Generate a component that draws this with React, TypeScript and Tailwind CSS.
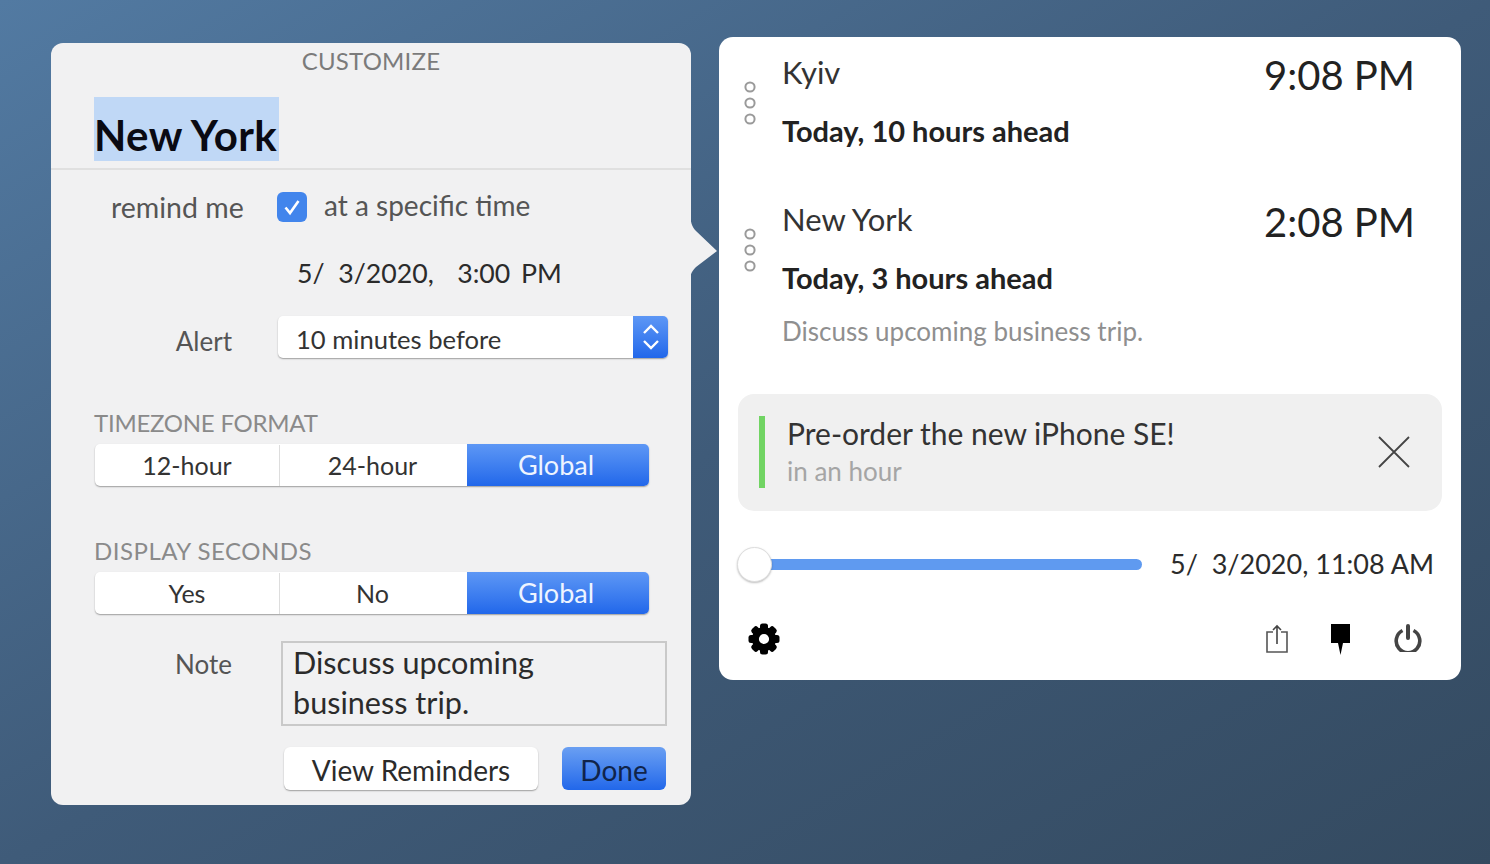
import React from "react";

const font = { fontFamily: "Lato, 'Noto Sans', sans-serif" };

function Segmented({ items }: { items: string[] }) {
  return (
    <div className="flex h-[42px] w-[554px] rounded-[5px] bg-white pt-[1px] shadow-[0_1px_1.5px_rgba(0,0,0,0.35)] text-[25px] text-[#333]">
      <div className="flex w-[185px] items-center justify-center border-r border-[#ddd]">{items[0]}</div>
      <div className="flex w-[187px] items-center justify-center pr-[2px]">{items[1]}</div>
      <div className="-mt-[1px] flex flex-1 items-center justify-center rounded-r-[5px] bg-gradient-to-b from-[#5d97f5] to-[#2167ea] pr-[4px] pt-[1px] text-[27px] text-[#eef4ff]">Global</div>
    </div>
  );
}

function Dots() {
  return (
    <svg width="14" height="48" viewBox="0 0 14 48" className="shrink-0">
      {[7, 23, 39].map((y) => (
        <circle key={y} cx="7" cy={y} r="4.6" fill="none" stroke="#9a9a9a" strokeWidth="2" />
      ))}
    </svg>
  );
}

function Row({ city, time, sub, note }: { city: string; time: string; sub: string; note?: string }) {
  return (
    <div className="flex">
      <div className="w-[63px] pt-[27px] pl-[24px]"><Dots /></div>
      <div className="flex-1 pr-[46px]">
        <div className="flex items-start justify-between">
          <div className="text-[31px] leading-[38px] text-[#333]">{city}</div>
          <div className="-mt-[1px] text-[40px] leading-[46px] text-[#222]">{time}</div>
        </div>
        <div className="mt-[15px] text-[29px] font-bold leading-[36px] text-[#222]">{sub}</div>
        {note && <div className="mt-[17px] text-[26px] leading-[36px] text-[#8f8f8f]">{note}</div>}
      </div>
    </div>
  );
}

function Gear() {
  return (
    <svg width="32" height="32" viewBox="0 0 32 32" className="-ml-[1px] mr-[1px]">
      <circle cx="16" cy="16" r="8.6" fill="none" stroke="#000" strokeWidth="7" />
      {[0, 45, 90, 135, 180, 225, 270, 315].map((a) => (
        <rect key={a} x="12" y="0.5" width="8" height="8" rx="2.5" fill="#000" transform={`rotate(${a} 16 16)`} />
      ))}
    </svg>
  );
}

export default function App() {
  return (
    <div
      style={font}
      className="flex h-[864px] w-[1490px] items-start gap-[28px] overflow-hidden bg-gradient-to-br from-[#527aa2] via-[#3f5b79] to-[#344a60] pl-[51px] pt-[37px]"
    >
      {/* Left panel */}
      <div className="relative mt-[6px] h-[762px] w-[640px] rounded-[12px] bg-[#f1f1f2]">
        <svg className="absolute left-[639px] top-[167px]" width="28" height="84" viewBox="0 0 28 84">
          <path d="M0 0 C0 12 2 17 6 21 L27 41 L6 57 C2 61 0 64 0 72 Z" fill="#f1f1f2" />
        </svg>
        <div className="pt-[3px] text-center text-[24px] leading-[30px] tracking-[0.2px] text-[#7b7b7b]">CUSTOMIZE</div>
        <div className="mt-[21px] flex h-[73px] items-start border-b-2 border-[#e0e0e0] pl-[43px]">
          <div className="flex h-[64px] w-[185px] items-end bg-[#c0d8f6] text-[42px] font-bold leading-[50px] tracking-[0.4px] text-[#0a0a12]">
            <span className="mb-[1px]">New York</span>
          </div>
        </div>
        <div className="mt-[19px] flex items-center pl-[60px]">
          <div className="w-[166px] text-[28.5px] leading-[36px] text-[#555]">remind me</div>
          <div className="flex h-[30px] w-[30px] items-center justify-center rounded-[6px] bg-[#4285ec]">
            <svg width="20" height="20" viewBox="0 0 20 20">
              <path d="M3.5 10.5 L8 16 L16.5 4" fill="none" stroke="#fff" strokeWidth="2.6" />
            </svg>
          </div>
          <div className="ml-[17px] -mt-[4px] text-[28px] leading-[36px] text-[#555]">at a specific time</div>
        </div>
        <div className="mt-[30px] whitespace-pre pl-[246px] text-[26.7px] leading-[36px] text-[#2b2b2b]">
          5/  3/2020,   <span className="ml-[3px] -mr-[3px]">3:00</span>  PM
        </div>
        <div className="mt-[24px] flex items-center">
          <div className="w-[181px] pt-[8px] text-right text-[26px] leading-[36px] text-[#555]">Alert</div>
          <div className="ml-[46px] flex h-[42px] w-[390px] rounded-[5px] bg-white shadow-[0_1px_1.5px_rgba(0,0,0,0.35)]">
            <div className="flex-1 pl-[18px] pt-[2px] text-[25.6px] leading-[42px] text-[#333]">10 minutes before</div>
            <div className="flex w-[35px] items-center justify-center rounded-r-[5px] bg-gradient-to-b from-[#5d97f5] to-[#2167ea]">
              <svg width="20" height="32" viewBox="0 0 20 32">
                <path d="M3 12 L10 5 L17 12 M3 20 L10 27 L17 20" fill="none" stroke="#fff" strokeWidth="2.4" />
              </svg>
            </div>
          </div>
        </div>
        <div className="ml-[43px] mt-[49px] text-[24px] leading-[30px] tracking-[-0.25px] text-[#8a8a8a]">TIMEZONE FORMAT</div>
        <div className="ml-[44px] mt-[6px]"><Segmented items={["12-hour", "24-hour"]} /></div>
        <div className="ml-[43px] mt-[50px] text-[24px] leading-[30px] tracking-[0.5px] text-[#8a8a8a]">DISPLAY SECONDS</div>
        <div className="ml-[44px] mt-[6px]"><Segmented items={["Yes", "No"]} /></div>
        <div className="mt-[27px] flex items-start">
          <div className="w-[181px] pt-[5px] text-right text-[26px] leading-[36px] text-[#555]">Note</div>
          <div className="ml-[49px] h-[85px] w-[386px] border-2 border-[#c9c9c9] pl-[10px] text-[30.6px] leading-[40px] text-[#2b2b2b]">
            Discuss upcoming<br />business trip.
          </div>
        </div>
        <div className="mt-[21px] flex items-center">
          <div className="ml-[233px] flex h-[43px] w-[254px] items-center justify-center rounded-[6px] bg-white pt-[3px] text-[28px] text-[#2b2b2b] shadow-[0_1px_1.5px_rgba(0,0,0,0.35)]">View Reminders</div>
          <div className="ml-[24px] flex h-[43px] w-[104px] items-center justify-center rounded-[6px] bg-gradient-to-b from-[#6a9ff2] to-[#2167ea] pt-[3px] text-[28px] text-[#10244a]">Done</div>
        </div>
      </div>

      {/* Right panel */}
      <div className="h-[643px] w-[742px] rounded-[14px] bg-white pt-[16px]">
        <Row city="Kyiv" time="9:08 PM" sub="Today, 10 hours ahead" />
        <div className="mt-[51px]">
          <Row city="New York" time="2:08 PM" sub="Today, 3 hours ahead" note="Discuss upcoming business trip." />
        </div>
        <div className="ml-[19px] mt-[45px] flex h-[117px] w-[704px] items-center rounded-[16px] bg-[#f0f0f0] pb-[2px] pl-[21px] pr-[32px]">
          <div className="h-[72px] w-[6px] bg-[#71d463]" />
          <div className="ml-[22px] -mt-[3px] flex-1">
            <div className="text-[30px] leading-[40px] text-[#333]">Pre-order the new iPhone SE!</div>
            <div className="text-[26px] leading-[34px] mt-[1px] text-[#a5a5a5]">in an hour</div>
          </div>
          <svg width="32" height="32" viewBox="0 0 32 32">
            <path d="M1 1 L31 31 M31 1 L1 31" stroke="#444" strokeWidth="1.8" />
          </svg>
        </div>
        <div className="mt-[35px] flex items-center pl-[18px]">
          <div className="relative z-10 h-[35px] w-[35px] rounded-full border border-[#ddd] bg-white shadow-[0_1px_2px_rgba(0,0,0,0.25)]" />
          <div className="-ml-[3px] h-[11px] w-[373px] rounded-r-full bg-[#5f9af0]" />
          <div className="ml-[28px] whitespace-pre text-[27px] leading-[36px] text-[#2b2b2b]">5/  3/2020, 11:08 AM</div>
        </div>
        <div className="mt-[41px] flex items-start pl-[30px] pr-[39px]">
          <Gear />
          <div className="flex-1" />
          <svg className="mt-[1px]" width="22" height="29" viewBox="0 0 22 29">
            <path d="M7 8 H1 V28 H21 V8 H15" fill="none" stroke="#555" strokeWidth="1.6" />
            <path d="M11 20 V2 M7 6 L11 2 L15 6" fill="none" stroke="#444" strokeWidth="1.6" />
          </svg>
          <svg className="ml-[43px] mt-[1px]" width="19" height="31" viewBox="0 0 19 31">
            <path d="M0 0 H19 V19 H12 L9.5 31 L7 19 H0 Z" fill="#000" />
          </svg>
          <svg className="ml-[44px] mt-[1px]" width="28" height="28" viewBox="0 0 28 28">
            <path d="M8.5 6.5 A11.8 11.8 0 1 0 19.5 6.5" fill="none" stroke="#444" strokeWidth="3.6" />
            <path d="M14 2 V14" fill="none" stroke="#444" strokeWidth="4" strokeLinecap="round" />
          </svg>
        </div>
      </div>
    </div>
  );
}
